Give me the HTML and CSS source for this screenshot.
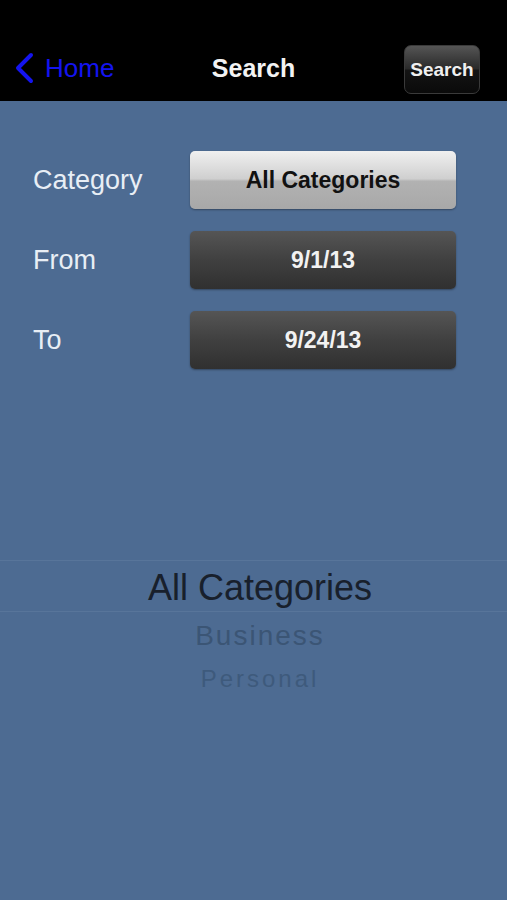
FILE: index.html
```html
<!DOCTYPE html>
<html lang="en">
<head>
    <meta charset="UTF-8">
    <meta name="viewport" content="width=device-width, initial-scale=1.0">
    <title>Search</title>
    <link rel="stylesheet" href="styles.css">
</head>
<body>
    <div class="navbar">
        <div class="back">
            <svg class="chevron" width="20" height="32" viewBox="0 0 20 32">
                <path d="M17 3 L4 16 L17 29" fill="none" stroke="#1414f0" stroke-width="4" stroke-linecap="round" stroke-linejoin="round"/>
            </svg>
            <span>Home</span>
        </div>
        <div class="title">Search</div>
        <button class="nav-button">Search</button>
    </div>

    <div class="form">
        <div class="row">
            <div class="label">Category</div>
            <button class="field light">All Categories</button>
        </div>
        <div class="row">
            <div class="label">From</div>
            <button class="field dark">9/1/13</button>
        </div>
        <div class="row">
            <div class="label">To</div>
            <button class="field dark">9/24/13</button>
        </div>
    </div>

    <div class="picker">
        <div class="picker-item selected">All Categories</div>
        <div class="picker-item second">Business</div>
        <div class="picker-item third">Personal</div>
    </div>
</body>
</html>
```

FILE: styles.css
```css
html, body {
    margin: 0;
    padding: 0;
}
body {
    font-family: "Liberation Sans", Arial, sans-serif;
    background-color: #4d6b92;
    height: 900px;
    overflow: hidden;
}
.navbar {
    background-color: #000;
    height: 101px;
    display: flex;
    align-items: flex-end;
    justify-content: space-between;
    padding: 0 27px 8px 14px;
    box-sizing: border-box;
    position: relative;
}
.back {
    display: flex;
    align-items: center;
    height: 48px;
    color: #1414f0;
    font-size: 26px;
    margin-bottom: 1px;
}
.chevron {
    margin-right: 11px;
}
.title {
    position: absolute;
    left: 0;
    right: 0;
    bottom: 18px;
    text-align: center;
    color: #f2f2f2;
    font-size: 25px;
    font-weight: bold;
    pointer-events: none;
}
.nav-button {
    width: 76px;
    height: 49px;
    border-radius: 7px;
    border: 1px solid #3a3a3a;
    background: linear-gradient(#555 0%, #2a2a2a 48%, #141414 52%, #0a0a0a 100%);
    color: #f0f0f0;
    font-family: "Liberation Sans", Arial, sans-serif;
    font-weight: bold;
    font-size: 19px;
    padding: 0;
    margin-bottom: -1px;
}
.form {
    padding: 50px 51px 0 33px;
    display: flex;
    flex-direction: column;
    gap: 22px;
}
.row {
    display: flex;
    align-items: center;
    justify-content: space-between;
}
.label {
    color: #e8eef5;
    font-size: 27px;
}
.field {
    width: 266px;
    height: 58px;
    border-radius: 5px;
    border: none;
    font-family: "Liberation Sans", Arial, sans-serif;
    font-weight: bold;
    font-size: 23px;
    padding: 0;
    box-shadow: 0 1px 2px rgba(0,0,0,0.35);
}
.light {
    background: linear-gradient(#f0f0f0 0%, #cfcfcf 48%, #b2b2b2 52%, #a8a8a8 100%);
    color: #111;
}
.dark {
    background: linear-gradient(#555 0%, #404040 50%, #303030 100%);
    color: #f2f2f2;
}
.picker {
    margin-top: 191px;
    display: flex;
    flex-direction: column;
    align-items: center;
}
.picker-item {
    text-align: center;
    width: 100%;
    padding-left: 13px;
    box-sizing: border-box;
}
.selected {
    height: 52px;
    line-height: 54px;
    font-size: 36px;
    color: #18202c;
    border-top: 1px solid #58759a;
    border-bottom: 1px solid #58759a;
}
.second {
    margin-top: 6px;
    font-size: 28px;
    line-height: 36px;
    color: #3b5575;
    letter-spacing: 2px;
}
.third {
    margin-top: 9px;
    font-size: 24px;
    line-height: 32px;
    color: #3e5a7c;
    letter-spacing: 3px;
}
```
